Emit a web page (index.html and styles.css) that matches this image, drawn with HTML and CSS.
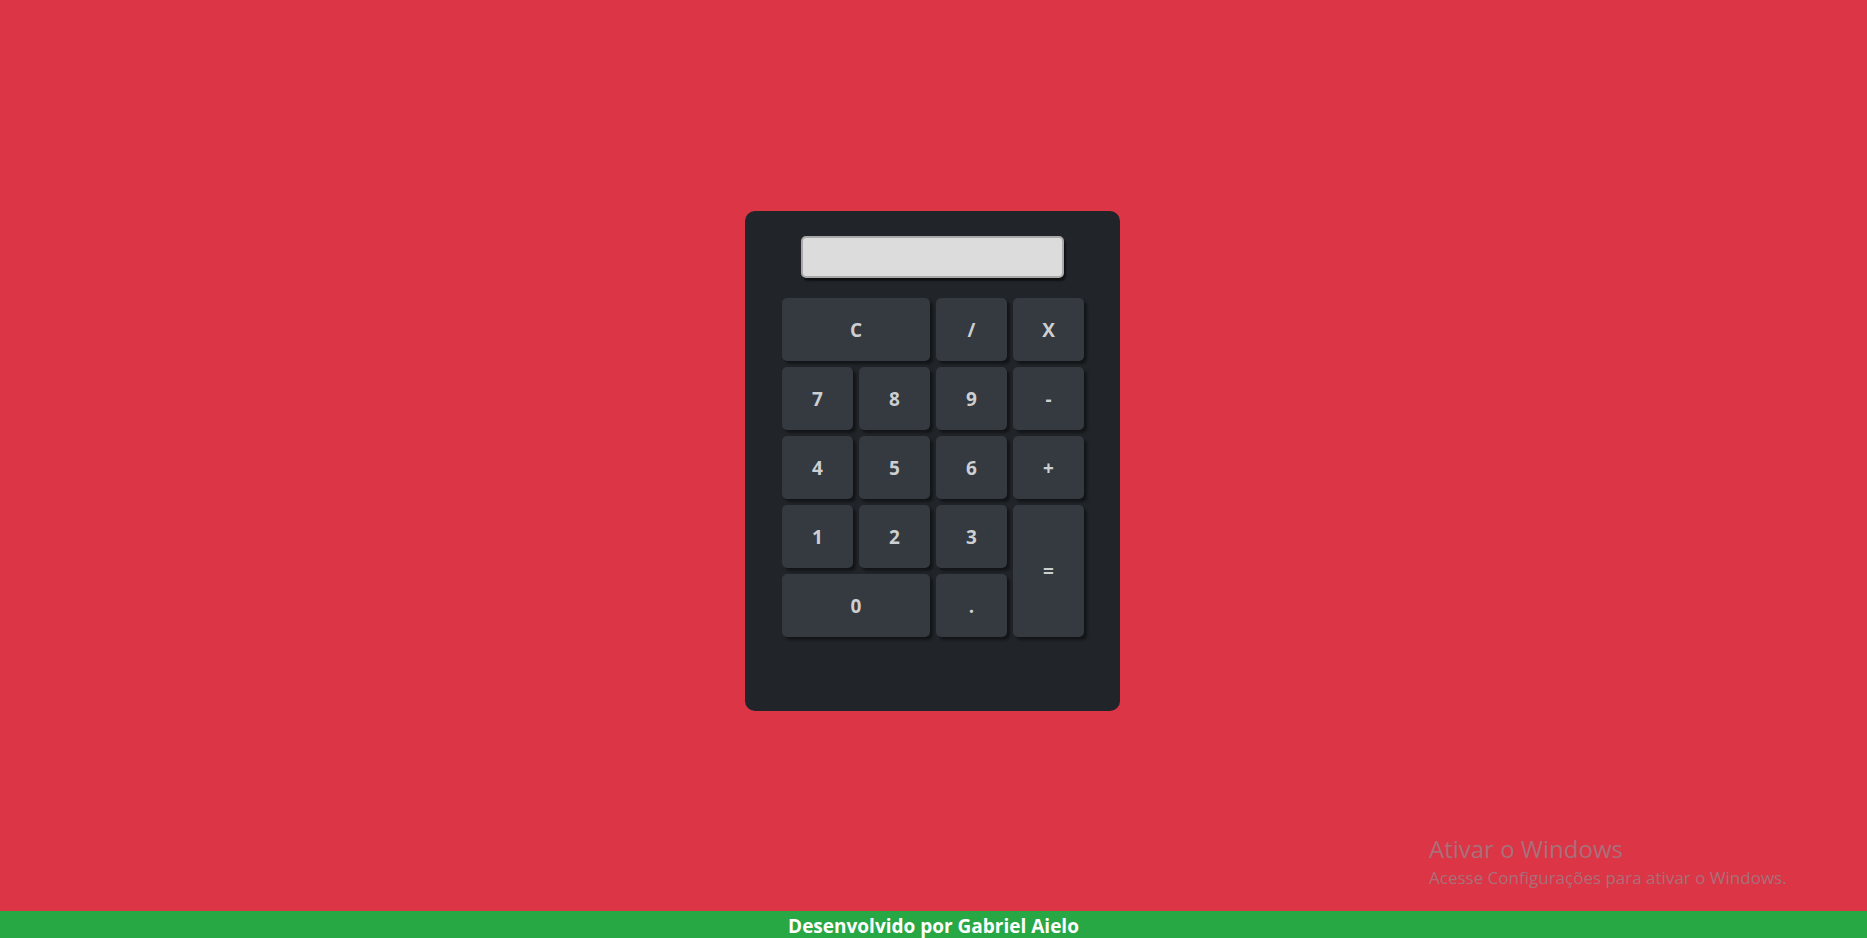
FILE: index.html
```html
<!DOCTYPE html>
<html lang="pt-BR">
<head>
<meta charset="utf-8">
<title>Calculadora</title>
<link rel="stylesheet" href="styles.css">
</head>
<body>
<main class="page">
  <div class="calc">
    <input class="display" type="text" readonly>
    <div class="keys">
      <button class="key wide">C</button>
      <button class="key">/</button>
      <button class="key">X</button>
      <button class="key">7</button>
      <button class="key">8</button>
      <button class="key">9</button>
      <button class="key">-</button>
      <button class="key">4</button>
      <button class="key">5</button>
      <button class="key">6</button>
      <button class="key">+</button>
      <button class="key">1</button>
      <button class="key">2</button>
      <button class="key">3</button>
      <button class="key tall">=</button>
      <button class="key wide">0</button>
      <button class="key">.</button>
    </div>
  </div>
</main>
<footer class="footer">Desenvolvido por Gabriel Aielo</footer>
<div class="watermark">
  <div class="wm-title">Ativar o Windows</div>
  <div class="wm-sub">Acesse Configurações para ativar o Windows.</div>
</div>
</body>
</html>
```
FILE: styles.css
```css
html, body {
  margin: 0;
  padding: 0;
}
body {
  background: #dc3545;
  font-family: "Open Sans", "Noto Sans", "Liberation Sans", sans-serif;
  height: 938px;
  overflow: hidden;
  display: flex;
  flex-direction: column;
}
.page {
  flex: 1;
  display: flex;
  justify-content: center;
  align-items: flex-start;
  padding-top: 211px;
}
.calc {
  box-sizing: border-box;
  width: 375px;
  height: 500px;
  background: #212529;
  border-radius: 10px;
  padding: 25px 0 0 37px;
  margin-right: 2px;
}
.display {
  display: block;
  box-sizing: border-box;
  width: 263px;
  height: 42px;
  margin: 0 0 20px 19px;
  background: #dcdcdc;
  border: 2px solid #a9a9a9;
  border-radius: 5px;
  box-shadow: 2px 3px 2px rgba(0, 0, 0, 0.55);
  outline: none;
  padding: 0 8px;
  font-family: inherit;
  font-size: 20px;
}
.keys {
  display: grid;
  grid-template-columns: repeat(4, 71px);
  grid-template-rows: repeat(5, 63px);
  gap: 6px 6px;
}
.key {
  background: #343a40;
  color: #cdcfd1;
  border: none;
  border-radius: 5px;
  box-shadow: 3px 3px 3px rgba(0, 0, 0, 0.45);
  font-family: "Open Sans", "Noto Sans", sans-serif;
  font-weight: 700;
  font-size: 19px;
  padding: 0;
  cursor: pointer;
}
.wide {
  grid-column: span 2;
}
.tall {
  grid-row: span 2;
}
.footer {
  box-sizing: border-box;
  height: 27px;
  line-height: 27px;
  padding-top: 2px;
  background: #28a745;
  color: #ffffff;
  text-align: center;
  font-weight: 700;
  font-size: 19px;
  overflow: hidden;
}
.watermark {
  position: absolute;
  left: 1429px;
  top: 833px;
  color: #a96f7a;
  font-family: "Open Sans", "Noto Sans", sans-serif;
  pointer-events: none;
}
.wm-title {
  font-size: 24px;
  font-weight: 400;
  line-height: 32px;
}
.wm-sub {
  font-size: 17px;
  line-height: 26px;
}
```
